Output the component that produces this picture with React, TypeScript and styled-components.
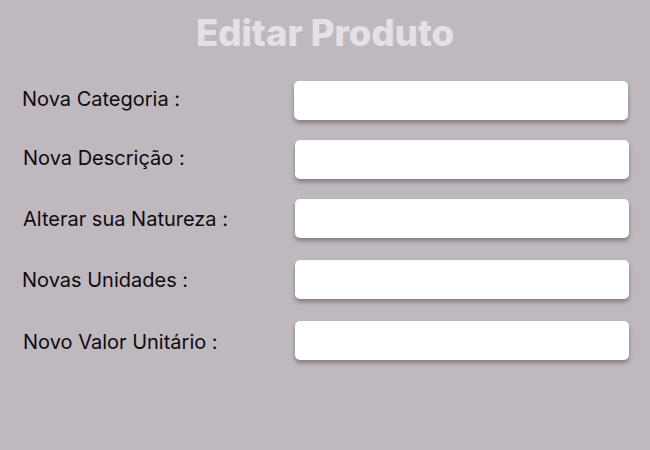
import React from "react";
import styled, { createGlobalStyle } from "styled-components";

const Global = createGlobalStyle`
  html, body { margin: 0; padding: 0; background: #c0b8bf; }
  body { font-family: Inter, "Noto Sans", sans-serif; }
`;

const Page = styled.div`
  width: 650px;
  height: 450px;
  background: #c0b8bf;
  box-sizing: border-box;
  padding-top: 11px;
`;

const Title = styled.h1`
  margin: 0;
  text-align: center;
  font-family: Inter, sans-serif;
  font-weight: 800;
  font-size: 36.5px;
  line-height: 44px;
  color: #e4e1e6;
`;

const Form = styled.div`
  display: flex;
  flex-direction: column;
  gap: 20px;
  margin-top: 26px;
`;

const Row = styled.div<{ $shift?: number; $labelX?: number }>`
  display: flex;
  align-items: center;
  height: 39px;
  margin-top: ${(p) => p.$shift ?? 0}px;
  padding-left: ${(p) => p.$labelX ?? 22}px;
`;

const Label = styled.label<{ $inputX: number; $labelX: number; $ty: number }>`
  width: ${(p) => p.$inputX - p.$labelX}px;
  flex: none;
  font-family: Inter, sans-serif;
  font-size: 20px;
  line-height: 24px;
  color: #0d0b0e;
  transform: translateY(${(p) => p.$ty}px);
`;

const Input = styled.input`
  width: 334px;
  height: 39px;
  box-sizing: border-box;
  border: none;
  border-radius: 5px;
  background: #ffffff;
  box-shadow: 0 3px 4px rgba(60, 50, 60, 0.45);
  outline: none;
  padding: 0 10px;
  font-family: Inter, sans-serif;
  font-size: 16px;
`;

const fields = [
  { label: "Nova Categoria :", shift: 0, labelX: 22, inputX: 294, ty: -2 },
  { label: "Nova Descrição :", shift: 0, labelX: 23, inputX: 295, ty: -2 },
  { label: "Alterar sua Natureza :", shift: 0, labelX: 23, inputX: 295, ty: 0 },
  { label: "Novas Unidades :", shift: 2, labelX: 22, inputX: 295, ty: 0 },
  { label: "Novo Valor Unitário :", shift: 2, labelX: 23, inputX: 295, ty: 1 },
];

export default function App() {
  return (
    <Page>
      <Global />
      <Title>Editar Produto</Title>
      <Form>
        {fields.map((f) => (
          <Row key={f.label} $shift={f.shift} $labelX={f.labelX}>
            <Label $inputX={f.inputX} $labelX={f.labelX} $ty={f.ty}>
              {f.label}
            </Label>
            <Input type="text" />
          </Row>
        ))}
      </Form>
    </Page>
  );
}
